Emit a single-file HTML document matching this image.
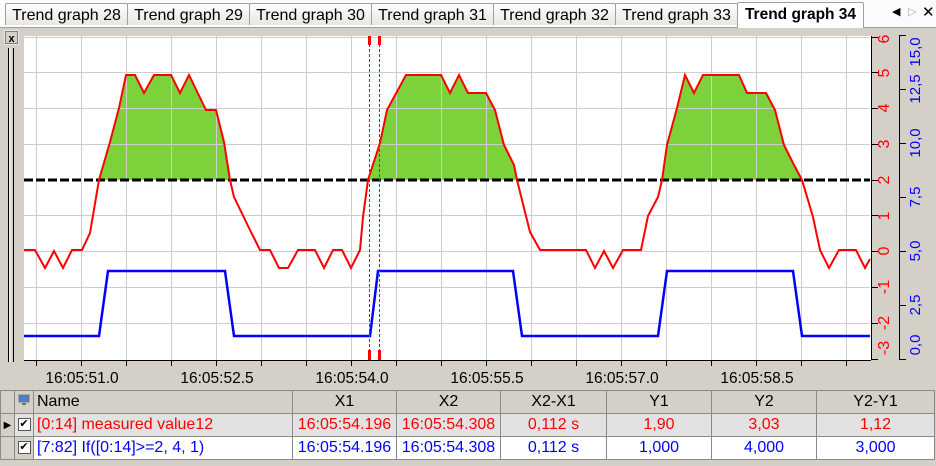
<!DOCTYPE html>
<html><head><meta charset="utf-8"><style>
body{margin:0;width:936px;height:466px;overflow:hidden;background:#d4d0c8;font-family:"Liberation Sans",sans-serif;position:relative}
.tabbar{position:absolute;left:0;top:0;width:936px;height:27px;background:#fbfbfb;border-bottom:1px solid #a0a0a0}
.tab{position:absolute;top:3px;height:22px;border:1px solid #a0a0a0;border-bottom:none;border-radius:2px 2px 0 0;background:linear-gradient(#fdfdfd,#e8e6e0);font-size:16px;line-height:23px;text-align:center;color:#000;box-sizing:border-box;white-space:nowrap;overflow:hidden}
.tab.act{background:#fff;top:2px;height:26px;font-weight:bold;border-bottom:none;font-size:15.5px}
table{position:absolute;left:0;top:390px;border-collapse:collapse;font-size:16px;table-layout:fixed;width:934px}
td{border:1px solid #8a8a8a;height:22px;padding:0 3px;text-align:center;white-space:nowrap;overflow:hidden}
.hd td{background:#d4d0c8;color:#000}
.r1 td{background:#e2e2e2;color:#f00}
.r2 td{background:#fff;color:#00f}
td.ind{background:#d4d0c8!important;padding:0}
.cb{display:inline-block;width:11px;height:11px;border:1px solid #555;background:#fff;font-size:11px;line-height:11px;color:#000;vertical-align:middle}
</style></head><body>
<div class="tabbar">
<div class="tab" style="left:5px;width:123px">Trend graph 28</div>
<div class="tab" style="left:127px;width:123px">Trend graph 29</div>
<div class="tab" style="left:249px;width:123px">Trend graph 30</div>
<div class="tab" style="left:371px;width:123px">Trend graph 31</div>
<div class="tab" style="left:493px;width:123px">Trend graph 32</div>
<div class="tab" style="left:615px;width:123px">Trend graph 33</div>
<div class="tab act" style="left:737px;width:127px">Trend graph 34</div>
<div style="position:absolute;left:892px;top:5px;font-size:11px">&#9664;</div>
<div style="position:absolute;left:908px;top:5px;font-size:11px;color:#aaa">&#9655;</div>
<div style="position:absolute;left:922px;top:3px;font-size:15px">&#10005;</div>
</div>
<svg width="936" height="390" style="position:absolute;left:0;top:0" xmlns="http://www.w3.org/2000/svg">
<rect x="5" y="31" width="13" height="13" fill="#d4d0c8" stroke="#fff"/>
<rect x="5.5" y="31.5" width="12" height="12" fill="none" stroke="#808080"/>
<text x="11.5" y="42" font-size="11" font-weight="bold" text-anchor="middle" font-family="Liberation Sans">x</text>
<line x1="8.5" y1="48" x2="8.5" y2="362" stroke="#000"/>
<line x1="13.5" y1="48" x2="13.5" y2="362" stroke="#000"/>
<line x1="10" y1="48" x2="10" y2="362" stroke="#fff"/>
<rect x="24" y="36" width="847" height="324" fill="#fff"/>
<g stroke="#cdcdcd" stroke-width="1">
<path d="M24 37.5H870M24 72.5H870M24 108.5H870M24 144.5H870M24 215.5H870M24 251.5H870M24 287.5H870M24 323.5H870"/>
<path d="M36.5 36V360M81.5 36V360M126.5 36V360M171.5 36V360M216.5 36V360M261.5 36V360M306.5 36V360M351.5 36V360M396.5 36V360M441.5 36V360M486.5 36V360M531.5 36V360M576.5 36V360M621.5 36V360M666.5 36V360M711.5 36V360M756.5 36V360M801.5 36V360M846.5 36V360"/>
</g>
<g fill="#7dd13b">
<polygon points="99,180 110,142 119,108 126,75 135,75 144,93 154,75 171,75 180,93 189,75 206,110 216,110 224,142 230,180"/>
<polygon points="368,180 380,143 387,110 406,75 441,75 450,93 459,75 468,93 486,93 495,110 504,145 514,165 517,180"/>
<polygon points="662,180 667,145 677,108 685,75 694,93 703,75 739,75 747,93 766,93 775,110 784,145 793,163 802,180"/>
</g>
<g stroke="#cdcdcd"><path d="M126.5 76V180M171.5 76V180M216.5 111V180M441.5 76V180M486.5 94V180M396.5 76V180M711.5 76V180M756.5 94V180"/></g>
<g stroke="#cdcdcd"><path d="M104 108.5H228M104 144.5H226M374 108.5H500M374 144.5H506M667 108.5H777M667 144.5H786"/></g>
<line x1="24" y1="180" x2="870" y2="180" stroke="#000" stroke-width="3" stroke-dasharray="9,3"/>
<polyline fill="none" stroke="#00f" stroke-width="2.5" points="24,336 99,336 108,271 225,271 234,336 370,336 378,271 513,271 522,336 658,336 667,271 793,271 802,336 870,336"/>
<polyline fill="none" stroke="#f00" stroke-width="2" points="24,250 35,250 45,268 54,251 63,268 72,250 82,250 90,233 99,180 110,142 119,108 126,75 135,75 144,93 154,75 171,75 180,93 189,75 206,110 216,110 224,142 230,180 234,197 250,230 260,250 270,250 279,268 288,268 298,250 315,250 324,268 333,250 342,250 351,268 360,250 363,217 368,180 380,143 387,110 406,75 441,75 450,93 459,75 468,93 486,93 495,110 504,145 514,165 517,180 530,232 540,250 586,250 595,268 604,251 613,268 623,250 641,250 648,216 658,197 662,180 667,145 677,108 685,75 694,93 703,75 739,75 747,93 766,93 775,110 784,145 793,163 802,180 813,217 820,250 829,268 839,250 856,250 865,268 870,259"/>
<g stroke="#f00" stroke-width="1" stroke-dasharray="3,2"><path d="M369.5 44V350M379.5 44V350"/></g>
<g fill="#f00"><rect x="368" y="36" width="3" height="9"/><rect x="378" y="36" width="3" height="9"/><rect x="368" y="350" width="3" height="10"/><rect x="378" y="350" width="3" height="10"/></g>
<line x1="24" y1="360.5" x2="871" y2="360.5" stroke="#000"/>
<g stroke="#000"><path d="M36.5 360V366M81.5 360V366M126.5 360V366M171.5 360V366M216.5 360V366M261.5 360V366M306.5 360V366M351.5 360V366M396.5 360V366M441.5 360V366M486.5 360V366M531.5 360V366M576.5 360V366M621.5 360V366M666.5 360V366M711.5 360V366M756.5 360V366M801.5 360V366M846.5 360V366"/></g>
<g font-size="15.5" text-anchor="middle" fill="#000" font-family="Liberation Sans">
<text x="82" y="383">16:05:51.0</text><text x="217" y="383">16:05:52.5</text><text x="352" y="383">16:05:54.0</text><text x="487" y="383">16:05:55.5</text><text x="622" y="383">16:05:57.0</text><text x="757" y="383">16:05:58.5</text>
</g>
<line x1="871.5" y1="36" x2="871.5" y2="360" stroke="#000"/>
<g stroke="#000"><path d="M871 37.5H878M871 72.5H878M871 108.5H878M871 144.5H878M871 180.5H878M871 215.5H878M871 251.5H878M871 287.5H878M871 323.5H878M871 359.5H878"/></g>
<line x1="899.5" y1="36" x2="899.5" y2="360" stroke="#000"/>
<g stroke="#000"><path d="M899 35.5H906M899 89.5H906M899 143.5H906M899 197.5H906M899 251.5H906M899 305.5H906M899 359.5H906"/></g>
<g font-size="16" fill="#f00" text-anchor="middle" font-family="Liberation Sans">
<text transform="translate(889,39) rotate(-90)">6</text><text transform="translate(889,73) rotate(-90)">5</text><text transform="translate(889,108) rotate(-90)">4</text><text transform="translate(889,144) rotate(-90)">3</text><text transform="translate(889,180) rotate(-90)">2</text><text transform="translate(889,216) rotate(-90)">1</text><text transform="translate(889,251) rotate(-90)">0</text><text transform="translate(889,287) rotate(-90)">-1</text><text transform="translate(889,323) rotate(-90)">-2</text><text transform="translate(889,348) rotate(-90)">-3</text>
</g>
<g font-size="15" fill="#00f" text-anchor="middle" font-family="Liberation Sans">
<text transform="translate(920,52) rotate(-90)">15,0</text><text transform="translate(920,89) rotate(-90)">12,5</text><text transform="translate(920,143) rotate(-90)">10,0</text><text transform="translate(920,197) rotate(-90)">7,5</text><text transform="translate(920,251) rotate(-90)">5,0</text><text transform="translate(920,305) rotate(-90)">2,5</text><text transform="translate(920,345) rotate(-90)">0,0</text>
</g>
</svg>
<table>
<colgroup><col style="width:14px"><col style="width:19px"><col style="width:259px"><col style="width:104px"><col style="width:104px"><col style="width:106px"><col style="width:105px"><col style="width:105px"><col style="width:118px"></colgroup>
<tr class="hd"><td class="ind"></td><td style="padding:0"><svg width="12" height="12"><rect x="1" y="1" width="10" height="7" fill="#4a7fd0" stroke="#777"/><rect x="4" y="9" width="4" height="2" fill="#777"/></svg></td><td style="text-align:left">Name</td><td>X1</td><td>X2</td><td>X2-X1</td><td>Y1</td><td>Y2</td><td>Y2-Y1</td></tr>
<tr class="r1"><td class="ind" style="font-size:10px;color:#000">&#9654;</td><td style="padding:0"><span class="cb">&#10004;</span></td><td style="text-align:left">[0:14] measured value12</td><td>16:05:54.196</td><td>16:05:54.308</td><td>0,112 s</td><td>1,90</td><td>3,03</td><td>1,12</td></tr>
<tr class="r2"><td class="ind"></td><td style="background:#d4d0c8;padding:0"><span class="cb">&#10004;</span></td><td style="text-align:left">[7:82] If([0:14]&gt;=2, 4, 1)</td><td>16:05:54.196</td><td>16:05:54.308</td><td>0,112 s</td><td>1,000</td><td>4,000</td><td>3,000</td></tr>
</table>
</body></html>
